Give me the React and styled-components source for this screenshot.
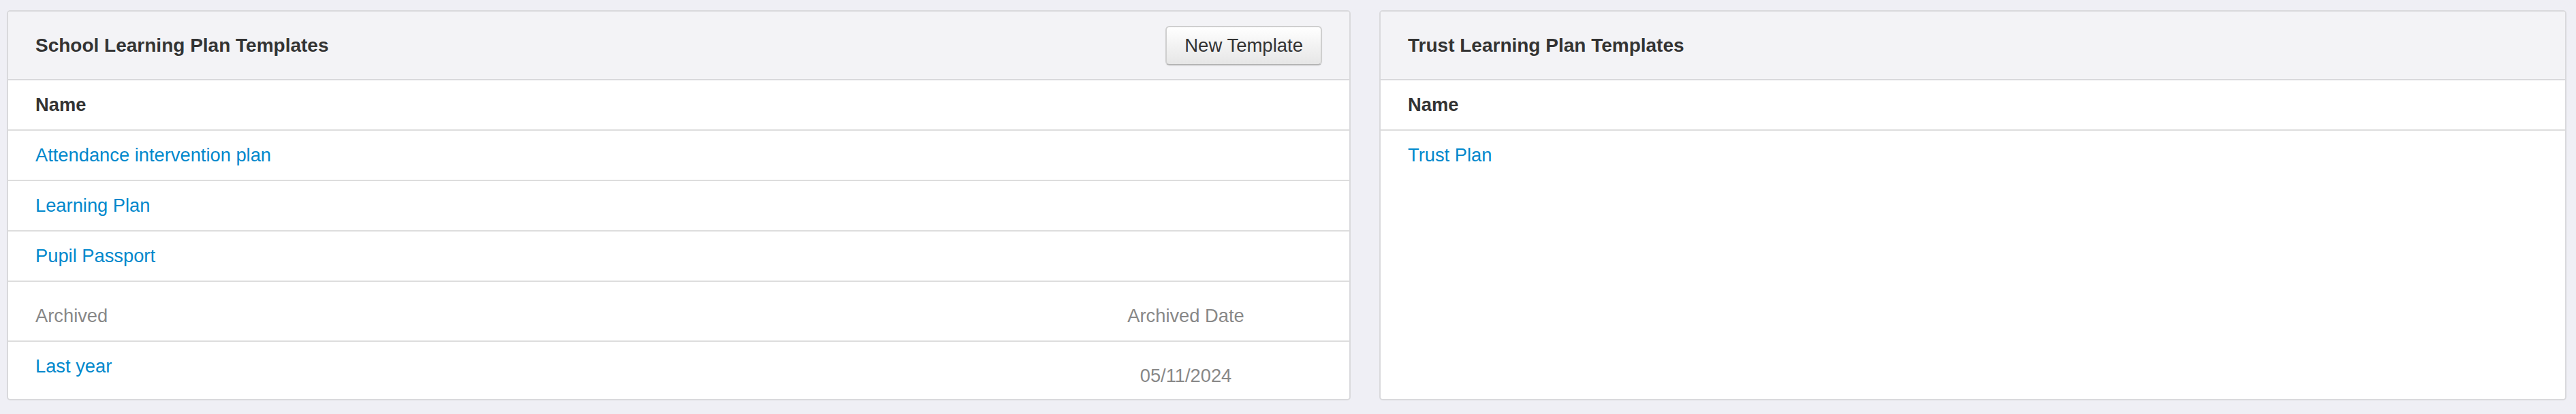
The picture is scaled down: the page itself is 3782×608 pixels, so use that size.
import React from "react";
import styled, { createGlobalStyle } from "styled-components";

const GlobalStyle = createGlobalStyle`
  html, body {
    margin: 0;
    padding: 0;
    background: #efeff5;
  }
  body {
    font-family: "Liberation Sans", Arial, Helvetica, sans-serif;
    font-size: 27.3px;
    line-height: 39px;
    color: #333333;
  }
`;

const Page = styled.div`
  display: grid;
  grid-template-columns: 1973fr 1743fr;
  column-gap: 42px;
  align-items: stretch;
  padding: 15px 14px 20px 10px;
`;

const Panel = styled.section`
  display: flex;
  flex-direction: column;
  background: #ffffff;
  border: 2px solid #d9d9dc;
  border-radius: 5px;
  overflow: hidden;
`;

const PanelHeader = styled.header`
  display: flex;
  align-items: center;
  justify-content: space-between;
  height: 99px;
  padding: 0 40px;
  background: #f3f3f6;
  border-bottom: 2px solid #d9d9dc;
`;

const PanelTitle = styled.h3`
  margin: 0;
  font-size: 28px;
  line-height: 39px;
  font-weight: bold;
  color: #333333;
`;

const Button = styled.button`
  font-family: inherit;
  font-size: 27.5px;
  line-height: 40px;
  color: #333333;
  padding: 7px 26px;
  border: 2px solid #cfcfcf;
  border-bottom-color: #b5b5b5;
  border-radius: 6px;
  background: linear-gradient(to bottom, #ffffff, #e6e6e6);
  box-shadow: inset 0 2px 0 rgba(255, 255, 255, 0.3), 0 1px 2px rgba(0, 0, 0, 0.06);
  cursor: pointer;
`;

const Row = styled.div`
  display: grid;
  grid-template-columns: 1fr 400px;
  align-items: start;
  padding: ${(p) => p.$pad || "16px 40px 17px"};
  border-bottom: ${(p) => (p.$last ? "none" : "2px solid #dddddd")};
`;

const HeadCell = styled.div`
  font-weight: ${(p) => (p.$muted ? "normal" : "bold")};
  color: ${(p) => (p.$muted ? "#888888" : "#333333")};
  text-align: ${(p) => (p.$center ? "center" : "left")};
`;

const LinkCell = styled.a`
  color: #0088cc;
  text-decoration: none;
  justify-self: start;
`;

const DateCell = styled.div`
  color: #888888;
  text-align: center;
  padding-top: 14px;
`;

const schoolTemplates = [
  "Attendance intervention plan",
  "Learning Plan",
  "Pupil Passport",
];

export default function App() {
  return (
    <>
      <GlobalStyle />
      <Page>
        <Panel>
          <PanelHeader>
            <PanelTitle>School Learning Plan Templates</PanelTitle>
            <Button type="button">New Template</Button>
          </PanelHeader>
          <Row>
            <HeadCell>Name</HeadCell>
          </Row>
          {schoolTemplates.map((name) => (
            <Row key={name}>
              <LinkCell href="#">{name}</LinkCell>
            </Row>
          ))}
          <Row $pad="30px 40px 17px">
            <HeadCell $muted>Archived</HeadCell>
            <HeadCell $muted $center>
              Archived Date
            </HeadCell>
          </Row>
          <Row $pad="16px 40px 15px" $last>
            <LinkCell href="#">Last year</LinkCell>
            <DateCell>05/11/2024</DateCell>
          </Row>
        </Panel>
        <Panel>
          <PanelHeader>
            <PanelTitle>Trust Learning Plan Templates</PanelTitle>
          </PanelHeader>
          <Row>
            <HeadCell>Name</HeadCell>
          </Row>
          <Row $last>
            <LinkCell href="#">Trust Plan</LinkCell>
          </Row>
        </Panel>
      </Page>
    </>
  );
}
